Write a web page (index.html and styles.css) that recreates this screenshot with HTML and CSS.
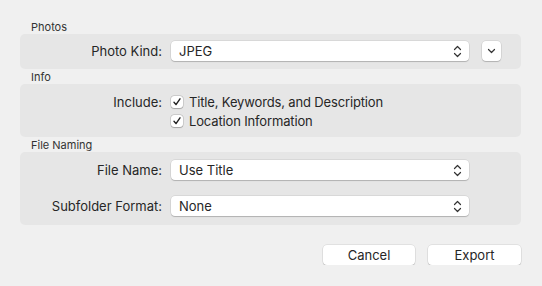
FILE: index.html
```html
<!DOCTYPE html>
<html lang="en">
<head>
<meta charset="UTF-8" />
<meta name="viewport" content="width=device-width, initial-scale=1" />
<title>Export</title>
<link rel="stylesheet" href="styles.css">
</head>
<body>
<div class="dialog">

    <!-- Photos -->
    <div class="group-title">Photos</div>
    <section class="panel panel-photos">
        <div class="row">
            <div class="label">Photo Kind:</div>
            <div class="popup">
                <span>JPEG</span>
                <svg class="updown" width="9" height="13" viewBox="0 0 9 13"><path d="M1.5 4.5 L4.5 1.5 L7.5 4.5 M1.5 8.5 L4.5 11.5 L7.5 8.5" /></svg>
            </div>
            <div class="disclose">
                <svg width="9" height="6" viewBox="0 0 9 6"><path d="M1.5 1.5 L4.5 4.5 L7.5 1.5" /></svg>
            </div>
        </div>
    </section>

    <!-- Info -->
    <div class="group-title">Info</div>
    <section class="panel panel-info">
        <div class="row check-row">
            <div class="label">Include:</div>
            <span class="checkbox"><svg width="12" height="12" viewBox="0 0 12 12"><path d="M3 6.3 L5 8.6 L9 2.8" /></svg></span>
            <span class="check-text">Title, Keywords, and Description</span>
        </div>
        <div class="row check-row">
            <div class="label"></div>
            <span class="checkbox"><svg width="12" height="12" viewBox="0 0 12 12"><path d="M3 6.3 L5 8.6 L9 2.8" /></svg></span>
            <span class="check-text">Location Information</span>
        </div>
    </section>

    <!-- File Naming -->
    <div class="group-title">File Naming</div>
    <section class="panel panel-naming">
        <div class="row">
            <div class="label">File Name:</div>
            <div class="popup">
                <span>Use Title</span>
                <svg class="updown" width="9" height="13" viewBox="0 0 9 13"><path d="M1.5 4.5 L4.5 1.5 L7.5 4.5 M1.5 8.5 L4.5 11.5 L7.5 8.5" /></svg>
            </div>
        </div>
        <div class="row">
            <div class="label">Subfolder Format:</div>
            <div class="popup">
                <span>None</span>
                <svg class="updown" width="9" height="13" viewBox="0 0 9 13"><path d="M1.5 4.5 L4.5 1.5 L7.5 4.5 M1.5 8.5 L4.5 11.5 L7.5 8.5" /></svg>
            </div>
        </div>
    </section>

    <div class="buttons">
        <button class="btn btn-cancel">Cancel</button>
        <button class="btn">Export</button>
    </div>

</div>
</body>
</html>
```

FILE: styles.css
```css
body {
    margin: 0;
    background: #f0f0f0;
    font-family: Inter, "Liberation Sans", sans-serif;
    font-size: 13px;
    color: #262626;
}
.dialog {
    width: 501px;
    padding: 20px 0 0 20px;
}
.group-title {
    font-size: 11px;
    line-height: 14px;
    padding-left: 11px;
    color: #333;
}
.panel {
    background: #e6e6e6;
    border-radius: 5px;
    margin-bottom: 1px;
}
.panel-photos {
    padding: 7px 0 8px;
}
.panel-info {
    padding: 8px 0 7px;
}
.panel-naming {
    padding: 8px 0 9px;
    display: flex;
    flex-direction: column;
    gap: 16px;
}
.row {
    display: flex;
    align-items: center;
}
.label {
    width: 151px;
    padding-right: 9px;
    box-sizing: border-box;
    text-align: right;
}
.popup {
    width: 298px;
    height: 20px;
    background: #fff;
    border-radius: 4px;
    box-shadow: 0 0 0 0.5px rgba(0,0,0,0.12), 0 1px 1px rgba(0,0,0,0.18);
    display: flex;
    align-items: center;
    justify-content: space-between;
    padding: 0 7px 0 8px;
    box-sizing: border-box;
}
.updown path, .disclose path {
    fill: none;
    stroke: #333;
    stroke-width: 1.2;
    stroke-linecap: round;
    stroke-linejoin: round;
}
.disclose {
    width: 19px;
    height: 20px;
    margin-left: 13px;
    background: #fff;
    border-radius: 4px;
    box-shadow: 0 0 0 0.5px rgba(0,0,0,0.12), 0 1px 1px rgba(0,0,0,0.18);
    display: flex;
    align-items: center;
    justify-content: center;
}
.check-row {
    height: 19px;
}
.checkbox {
    width: 12px;
    height: 12px;
    background: #fff;
    border-radius: 3px;
    box-shadow: 0 0 0 0.5px rgba(0,0,0,0.2), 0 0.5px 1px rgba(0,0,0,0.2);
    display: flex;
}
.checkbox path {
    fill: none;
    stroke: #222;
    stroke-width: 1.4;
    stroke-linecap: round;
    stroke-linejoin: round;
}
.check-text {
    margin-left: 6px;
    letter-spacing: -0.15px;
}
.buttons {
    display: flex;
    justify-content: flex-end;
    gap: 13px;
    margin-top: 20px;
}
.btn {
    width: 93px;
    height: 20px;
    background: #fff;
    border: none;
    border-radius: 4px;
    box-shadow: 0 0 0 0.5px rgba(0,0,0,0.12), 0 1px 1px rgba(0,0,0,0.18);
    font-family: inherit;
    font-size: 13px;
    color: #262626;
    padding: 0;
}
.btn-cancel {
    width: 92px;
}
```
